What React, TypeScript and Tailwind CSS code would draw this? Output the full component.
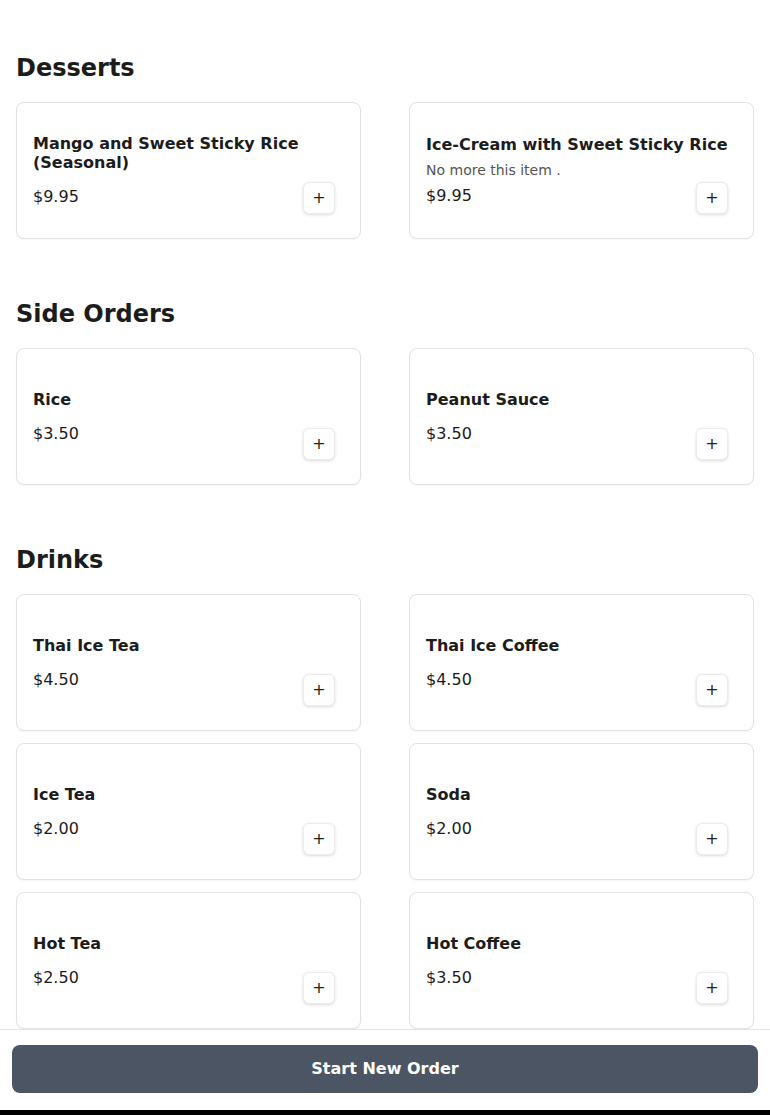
import React from "react";

type Item = { name: string; price: string; desc?: string };
type Section = { title: string; items: Item[] };

const sections: Section[] = [
  {
    title: "Desserts",
    items: [
      { name: "Mango and Sweet Sticky Rice (Seasonal)", price: "$9.95" },
      { name: "Ice-Cream with Sweet Sticky Rice", price: "$9.95", desc: "No more this item ." },
    ],
  },
  {
    title: "Side Orders",
    items: [
      { name: "Rice", price: "$3.50" },
      { name: "Peanut Sauce", price: "$3.50" },
    ],
  },
  {
    title: "Drinks",
    items: [
      { name: "Thai Ice Tea", price: "$4.50" },
      { name: "Thai Ice Coffee", price: "$4.50" },
      { name: "Ice Tea", price: "$2.00" },
      { name: "Soda", price: "$2.00" },
      { name: "Hot Tea", price: "$2.50" },
      { name: "Hot Coffee", price: "$3.50" },
    ],
  },
];

function Card({ item }: { item: Item }) {
  return (
    <div className="grid h-[137px] rounded-lg border border-[#e2e2e2] bg-white shadow-[0_1px_2px_rgba(0,0,0,0.04)]">
      <div className="col-start-1 row-start-1 flex flex-col justify-center pl-4 pr-4 pt-[3px]">
        <div className="mb-2 text-base font-bold leading-[19px] text-[#1c1c1c]">{item.name}</div>
        {item.desc && (
          <div className="text-sm leading-[17px] text-[#555]">{item.desc}</div>
        )}
        <div className="mt-1 text-base leading-[26px] text-[#1c1c1c]">{item.price}</div>
      </div>
      <button className="col-start-1 row-start-1 mb-6 mr-[25px] flex h-[32px] w-[32px] items-center justify-center self-end justify-self-end rounded-md border border-[#ececec] bg-white text-base text-[#222] shadow-[0_1px_3px_rgba(0,0,0,0.15)]">
        +
      </button>
    </div>
  );
}

export default function App() {
  return (
    <div
      className="min-h-screen bg-white text-[#1c1c1c]"
      style={{ fontFamily: '"DejaVu Sans", sans-serif' }}
    >
      <div className="flex flex-col gap-[59px] px-4 pt-[52px] pb-[120px]">
        {sections.map((s) => (
          <section key={s.title}>
            <h2 className="mb-[18px] text-2xl font-bold leading-8 text-[#1c1c1c]">{s.title}</h2>
            <div className="grid grid-cols-2 gap-x-12 gap-y-3">
              {s.items.map((it) => (
                <Card key={it.name} item={it} />
              ))}
            </div>
          </section>
        ))}
      </div>
      <div className="fixed bottom-0 left-0 right-0">
        <div className="border-t border-[#e5e5e5] bg-white px-3 pt-[15px] pb-[17px]">
          <button className="h-12 w-full rounded-lg bg-[#4b5563] text-base font-bold text-white">
            Start New Order
          </button>
        </div>
        <div className="h-[5px] bg-black" />
      </div>
    </div>
  );
}
